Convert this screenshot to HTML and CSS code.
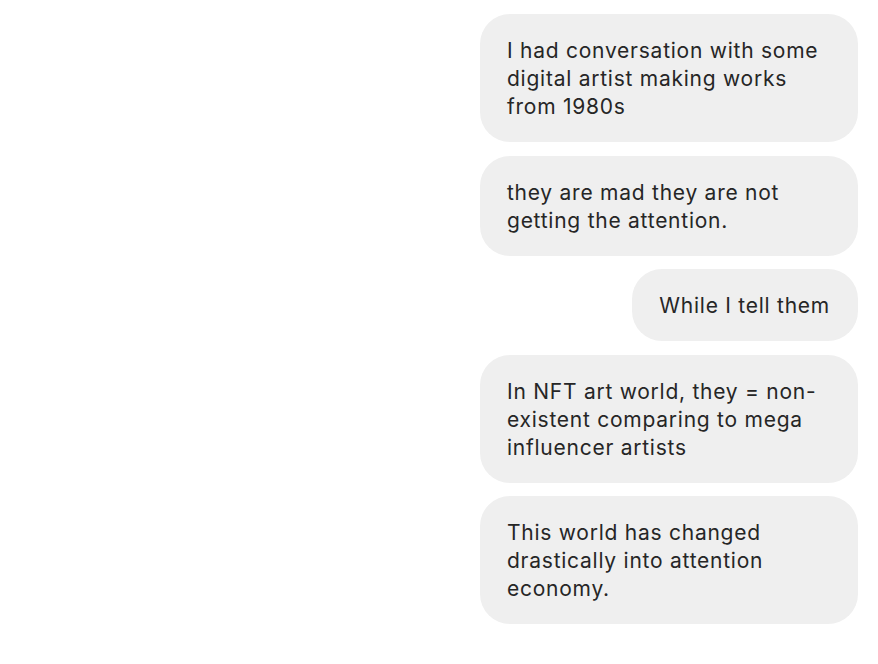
FILE: index.html
```html
<!DOCTYPE html>
<html lang="en">
<head>
<meta charset="utf-8">
<title>Messages</title>
<link rel="stylesheet" href="styles.css">
</head>
<body>
<div class="thread">
  <div class="bubble">I had conversation with some digital artist making works from 1980s</div>
  <div class="bubble">they are mad they are not getting the attention.</div>
  <div class="bubble">While I tell them</div>
  <div class="bubble">In NFT art world, they = non-existent comparing to mega influencer artists</div>
  <div class="bubble">This world has changed drastically into attention economy.</div>
</div>
</body>
</html>
```
FILE: styles.css
```css
html, body {
  margin: 0;
  padding: 0;
  background: #ffffff;
}
.thread {
  display: flex;
  flex-direction: column;
  align-items: flex-end;
  gap: 13.5px;
  padding: 14px 20px 0 0;
  font-family: Inter, "Noto Sans", sans-serif;
  font-size: 21px;
  line-height: 28px;
  letter-spacing: 0.75px;
  color: #262626;
}
.bubble {
  box-sizing: border-box;
  max-width: 378px;
  background: #efefef;
  border-radius: 30px;
  padding: 23px 28px 21px 27px;
}
```
